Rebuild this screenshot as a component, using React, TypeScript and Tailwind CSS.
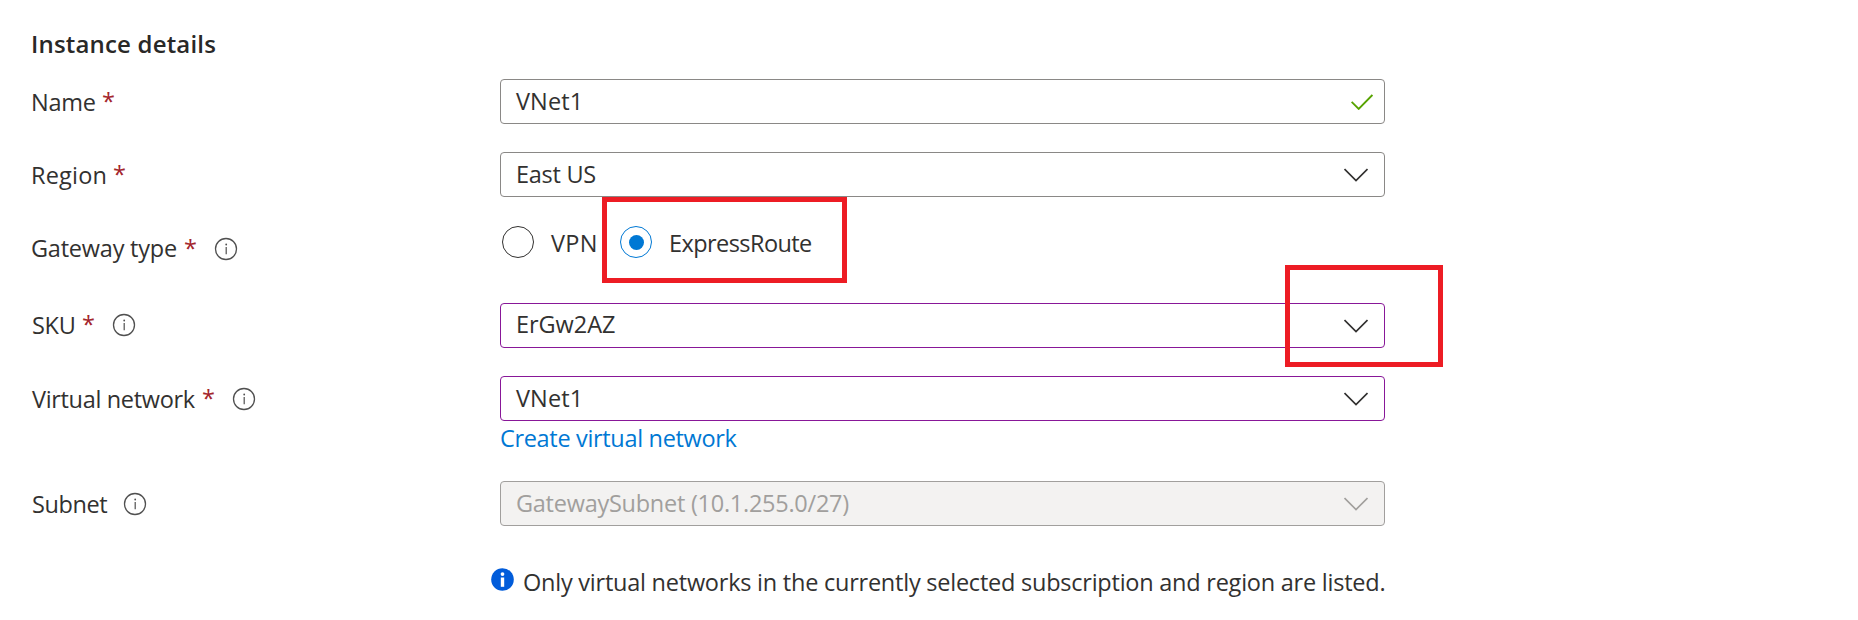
import type { ReactNode } from "react";

function InfoIcon() {
  return (
    <svg className="block h-6 w-6 shrink-0" viewBox="0 0 24 24" fill="none">
      <circle cx="12" cy="12" r="10.5" stroke="#505050" strokeWidth="1.3" />
      <path d="M12.2 10v7.2" stroke="#505050" strokeWidth="1.2" />
      <circle cx="12.2" cy="7.5" r="0.9" fill="#505050" />
    </svg>
  );
}

function Chevron() {
  return (
    <svg className="block h-[14px] w-6 shrink-0" viewBox="0 0 24 14" fill="none">
      <path d="M0.5 1L12 12.5L23.5 1" stroke="currentColor" strokeWidth="1.7" />
    </svg>
  );
}

function Check() {
  return (
    <svg className="block h-4 w-[22px] shrink-0" viewBox="0 0 22 16" fill="none">
      <path d="M0.6 7.8L7.7 14.9L21.4 1" stroke="#57a300" strokeWidth="1.9" />
    </svg>
  );
}

type LabelProps = { text: string; className: string; required?: boolean; info?: boolean };

function Label({ text, className, required, info }: LabelProps) {
  return (
    <div className="flex h-[45px] w-[500px] shrink-0 items-center">
      <span className={`shrink-0 ${className}`}>{text}</span>
      {required && (
        <span className="w-[30px] shrink-0 font-medium text-[#a4262c]">*</span>
      )}
      {info && <InfoIcon />}
    </div>
  );
}

type FieldProps = { className: string; textClass: string; value: string; children: ReactNode };

function Field({ className, textClass, value, children }: FieldProps) {
  return (
    <div className={`flex h-[45px] w-[885px] items-center justify-between rounded-[4px] border ${className}`}>
      <span className={textClass}>{value}</span>
      {children}
    </div>
  );
}

export default function App() {
  return (
    <main className="relative flex h-[620px] w-[1858px] flex-col overflow-hidden whitespace-nowrap bg-white font-['Open_Sans','Noto_Sans',sans-serif] text-[23.5px] leading-[43px] text-[#323130]">
      <h2 className="h-[79px] pl-[31px] pt-[22px] text-[24px] font-semibold tracking-[0.18px] text-[#292827]">
        Instance details
      </h2>

      <div className="flex h-[73px]">
        <Label text="Name" className="w-[102px] pl-[31px] pt-[2px] tracking-[-0.25px]" required />
        <Field className="border-[#8a8886] pr-[11px]" textClass="pl-[15px] tracking-[0.1px]" value="VNet1">
          <Check />
        </Field>
      </div>

      <div className="flex h-[73px]">
        <Label text="Region" className="w-[113px] pl-[31px] pt-[2px] tracking-[0.2px]" required />
        <Field className="border-[#8a8886] pr-4" textClass="pl-[15px] tracking-[-0.28px]" value="East US">
          <Chevron />
        </Field>
      </div>

      <div className="flex h-[78px]">
        <div className="pt-px">
          <Label text="Gateway type" className="w-[184px] pl-[31px] tracking-[-0.22px]" required info />
        </div>
        <div className="flex h-[34px] items-center">
          <label className="flex w-[118px] items-center pl-[2px]">
            <span className="h-8 w-8 shrink-0 rounded-full border border-[#323130]" />
            <span className="pl-[17px] pt-[3px] tracking-[0.3px]">VPN</span>
          </label>
          <label className="flex items-center pl-[2px]">
            <span className="flex h-8 w-8 shrink-0 items-center justify-center rounded-full border border-[#0078d4]">
              <span className="h-[15px] w-[15px] rounded-full bg-[#0078d4]" />
            </span>
            <span className="pl-[17px] pt-[3px] tracking-[-0.57px]">ExpressRoute</span>
          </label>
        </div>
      </div>

      <div className="flex h-[73px]">
        <div className="-mt-px">
          <Label text="SKU" className="w-[82px] pl-[32px] pt-px tracking-[-0.3px]" required info />
        </div>
        <Field className="border-[#881798] pr-4" textClass="pb-[2px] pl-[15px] tracking-[-0.05px]" value="ErGw2AZ">
          <Chevron />
        </Field>
      </div>

      <div className="flex h-[105px]">
        <Label text="Virtual network" className="w-[202px] pl-[32px] pt-[2px] tracking-[-0.33px]" required info />
        <div>
          <Field className="border-[#881798] pr-4" textClass="pl-[15px] tracking-[0.1px]" value="VNet1">
            <Chevron />
          </Field>
          <a className="block h-[34px] leading-[34px] tracking-[-0.33px] text-[#0078d4]">Create virtual network</a>
        </div>
      </div>

      <div className="flex h-[78px]">
        <Label text="Subnet" className="w-[123px] pl-[32px] pt-[2px] tracking-[-0.4px]" info />
        <Field
          className="border-[#a19f9d] bg-[#f3f2f1] pr-4 text-[#a19f9d]"
          textClass="pl-[15px] tracking-[-0.26px]"
          value="GatewaySubnet (10.1.255.0/27)"
        >
          <Chevron />
        </Field>
      </div>

      <div className="flex h-[45px] items-start pl-[491px]">
        <svg className="mt-[9px] block h-[23px] w-[23px] shrink-0" viewBox="0 0 23 23">
          <circle cx="11.5" cy="11.5" r="11.3" fill="#015cda" />
          <circle cx="11.5" cy="6.1" r="1.9" fill="#fff" />
          <path d="M9.8 9.5h3.4v9.3H9.8z" fill="#fff" />
        </svg>
        <span className="pl-[9px] pt-[2px] tracking-[-0.235px]">
          Only virtual networks in the currently selected subscription and region are listed.
        </span>
      </div>

      <div className="absolute left-[602px] top-[197px] h-[86px] w-[245px] border-5 border-[#ed1c24]" />
      <div className="absolute left-[1285px] top-[265px] h-[102px] w-[158px] border-5 border-[#ed1c24]" />
    </main>
  );
}
